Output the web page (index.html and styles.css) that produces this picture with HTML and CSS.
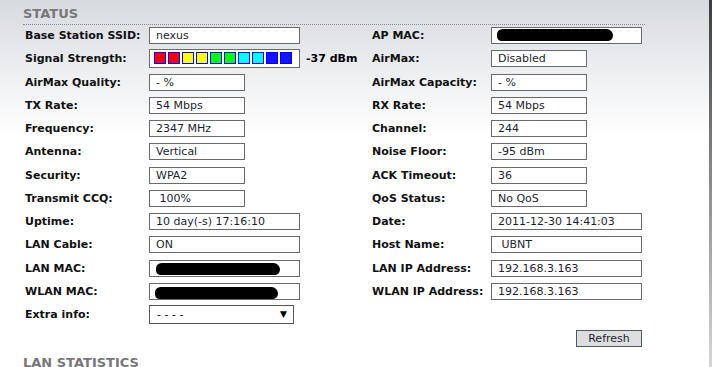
FILE: index.html
```html
<!DOCTYPE html>
<html>
    <head>
        <title>Status</title>
        <link rel="stylesheet" href="styles.css">
    </head>
<body>
    <div class="page">
        <div class="content">
            <div class="section-title">STATUS</div>
            <div class="status-grid">
                <div class="label">Base Station SSID:</div>
                <div class="cell"><span class="value wide">nexus</span></div>
                <div class="label">AP MAC:</div>
                <div class="cell"><span class="value wide"><span class="redacted ap"></span></span></div>

                <div class="label">Signal Strength:</div>
                <div class="cell">
                    <span class="signal">
                        <span class="bar red"></span><span class="bar red"></span>
                        <span class="bar yellow"></span><span class="bar yellow"></span>
                        <span class="bar green"></span><span class="bar green"></span>
                        <span class="bar cyan"></span><span class="bar cyan"></span>
                        <span class="bar blue"></span><span class="bar blue"></span>
                    </span>
                    <span class="dbm">-37 dBm</span>
                </div>
                <div class="label">AirMax:</div>
                <div class="cell"><span class="value">Disabled</span></div>

                <div class="label">AirMax Quality:</div>
                <div class="cell"><span class="value">- %</span></div>
                <div class="label">AirMax Capacity:</div>
                <div class="cell"><span class="value">- %</span></div>

                <div class="label">TX Rate:</div>
                <div class="cell"><span class="value">54 Mbps</span></div>
                <div class="label">RX Rate:</div>
                <div class="cell"><span class="value">54 Mbps</span></div>

                <div class="label">Frequency:</div>
                <div class="cell"><span class="value">2347 MHz</span></div>
                <div class="label">Channel:</div>
                <div class="cell"><span class="value">244</span></div>

                <div class="label">Antenna:</div>
                <div class="cell"><span class="value">Vertical</span></div>
                <div class="label">Noise Floor:</div>
                <div class="cell"><span class="value">-95 dBm</span></div>

                <div class="label">Security:</div>
                <div class="cell"><span class="value">WPA2</span></div>
                <div class="label">ACK Timeout:</div>
                <div class="cell"><span class="value">36</span></div>

                <div class="label">Transmit CCQ:</div>
                <div class="cell"><span class="value">&nbsp;100%</span></div>
                <div class="label">QoS Status:</div>
                <div class="cell"><span class="value">No QoS</span></div>

                <div class="label">Uptime:</div>
                <div class="cell"><span class="value wide">10 day(-s) 17:16:10</span></div>
                <div class="label">Date:</div>
                <div class="cell"><span class="value wide">2011-12-30 14:41:03</span></div>

                <div class="label">LAN Cable:</div>
                <div class="cell"><span class="value wide">ON</span></div>
                <div class="label">Host Name:</div>
                <div class="cell"><span class="value wide">&nbsp;UBNT</span></div>

                <div class="label">LAN MAC:</div>
                <div class="cell"><span class="value wide"><span class="redacted lan"></span></span></div>
                <div class="label">LAN IP Address:</div>
                <div class="cell"><span class="value wide">192.168.3.163</span></div>

                <div class="label">WLAN MAC:</div>
                <div class="cell"><span class="value wide"><span class="redacted wlan"></span></span></div>
                <div class="label">WLAN IP Address:</div>
                <div class="cell"><span class="value wide">192.168.3.163</span></div>

                <div class="label">Extra info:</div>
                <div class="cell">
                    <div class="select">
                        <span>- - - -</span>
                        <span class="arrow">&#9660;</span>
                    </div>
                </div>
            </div>
            <div class="actions">
                <div role="button" class="refresh">Refresh</div>
            </div>
            <div class="section-title next">LAN STATISTICS</div>
        </div>
        <div class="edge"></div>
    </div>
</body>
</html>
```

FILE: styles.css
```css
html, body {
    margin: 0;
    height: 100%;
    overflow: hidden;
}

body {
    font-family: "DejaVu Sans", Verdana, sans-serif;
    font-size: 11px;
    color: #000;
    background: linear-gradient(#d7dadf 0, #eceef0 70px, #ffffff 135px) no-repeat;
    background-color: #fff;
}

.page {
    display: flex;
    height: 100%;
}

.content {
    flex: 1;
    padding: 6px 0 0 25px;
}

.edge {
    width: 3px;
    background: linear-gradient(#3c3c3c 0, #8a8a8a 180px, #d6d6d6 100%);
}

.section-title {
    margin-left: -2px;
    width: 622px;
    font-size: 13px;
    line-height: 16px;
    font-weight: bold;
    color: #777;
    padding-bottom: 2px;
    border-bottom: 1px dotted #888;
}

.section-title.next {
    margin-top: 8px;
    border-bottom: none;
}

.status-grid {
    display: grid;
    grid-template-columns: 124px 223px 119px auto;
    grid-auto-rows: 23.25px;
    padding-top: 2px;
}

.label {
    font-weight: bold;
    line-height: 17px;
    white-space: nowrap;
    color: #111;
}

.cell {
    display: flex;
    align-items: flex-start;
}

.value {
    display: block;
    box-sizing: border-box;
    width: 96px;
    height: 17px;
    line-height: 15px;
    padding-left: 6px;
    border: 1px solid #6a6a6a;
    background-color: #fff;
    color: #1e1e30;
    white-space: nowrap;
    overflow: hidden;
}

.value.wide {
    width: 151px;
}

.redacted {
    display: inline-block;
    height: 12px;
    margin-top: 1px;
    background-color: #000;
    border-radius: 6px 7px 6px 5px;
}

.redacted.ap {
    width: 116px;
    margin-left: -1px;
}

.redacted.lan {
    width: 124px;
    margin-top: 2px;
}

.redacted.wlan {
    width: 123px;
    margin-left: -1px;
    margin-top: 3px;
}

.signal {
    display: flex;
    gap: 2px;
    box-sizing: border-box;
    width: 151px;
    height: 19px;
    padding: 2px 0 0 4px;
    border: 1px solid #6a6a6a;
    background-color: #fff;
    margin-top: -1px;
}

.bar {
    box-sizing: border-box;
    width: 12px;
    height: 12px;
    border: 1px solid #0000ff;
}

.bar.red { background-color: #ff0000; }
.bar.yellow { background-color: #ffff00; }
.bar.green { background-color: #00ff00; }
.bar.cyan { background-color: #00ffff; }
.bar.blue { background-color: #1414ff; }

.dbm {
    font-weight: bold;
    line-height: 17px;
    margin-left: 6px;
    white-space: nowrap;
}

.select {
    display: flex;
    justify-content: space-between;
    box-sizing: border-box;
    width: 145px;
    height: 19px;
    line-height: 17px;
    padding: 0 6px 0 7px;
    border: 1px solid #555;
    background-color: #fff;
    margin-top: -1px;
}

.select .arrow {
    font-size: 9px;
}

.actions {
    display: flex;
    justify-content: flex-end;
    width: 617px;
    margin-top: 1px;
}

.refresh {
    box-sizing: border-box;
    width: 66px;
    height: 17px;
    line-height: 15px;
    text-align: center;
    background-color: #dedede;
    border: 1px solid #4e5964;
    color: #1e1e30;
    cursor: pointer;
}
```
